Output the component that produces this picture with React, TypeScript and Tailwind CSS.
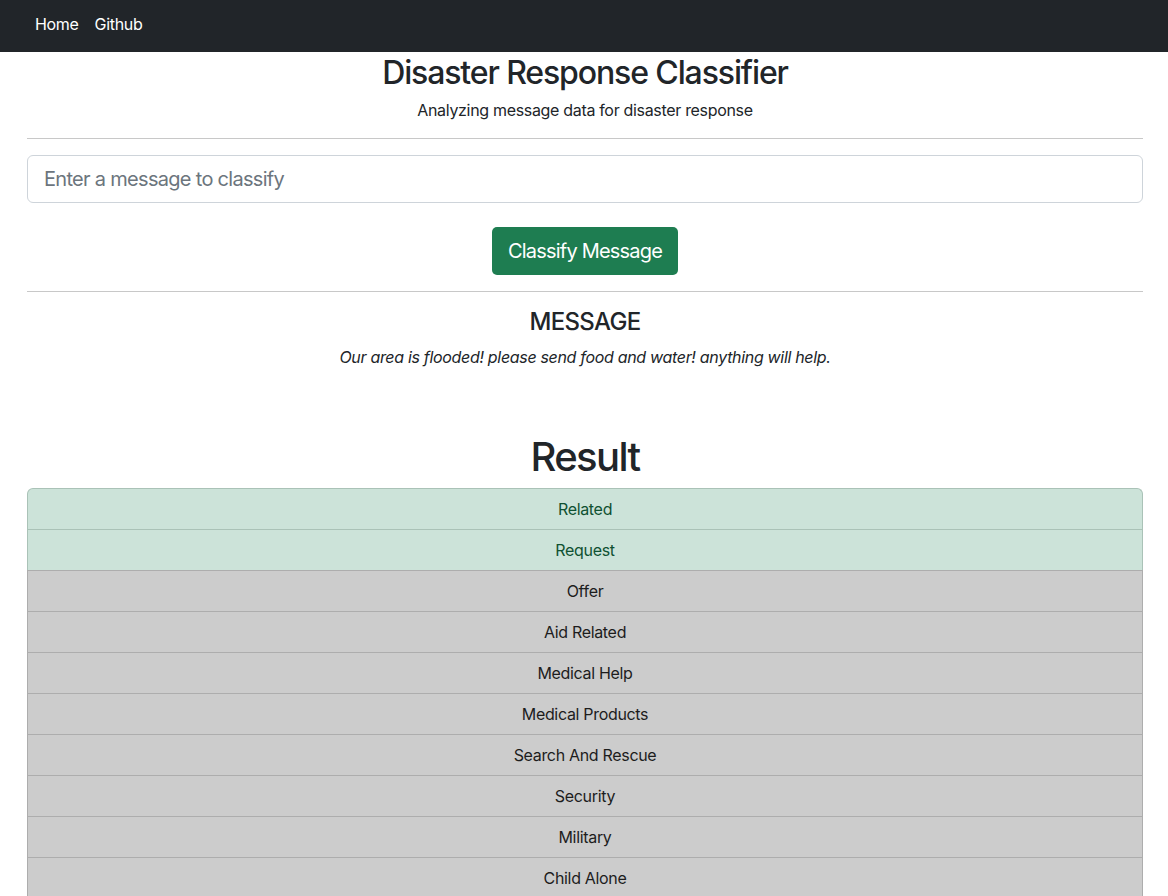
import React from "react";

// категории из датасета, первые две совпали с сообщением
const categories: { name: string; hit: boolean }[] = [
  { name: "Related", hit: true },
  { name: "Request", hit: true },
  { name: "Offer", hit: false },
  { name: "Aid Related", hit: false },
  { name: "Medical Help", hit: false },
  { name: "Medical Products", hit: false },
  { name: "Search And Rescue", hit: false },
  { name: "Security", hit: false },
  { name: "Military", hit: false },
  { name: "Child Alone", hit: false },
  { name: "Water", hit: true },
  { name: "Food", hit: true },
  { name: "Shelter", hit: false },
  { name: "Clothing", hit: false },
];

export default function App() {
  return (
    <div className="min-h-screen bg-white text-[#212529] font-['Inter','Liberation_Sans',sans-serif] tracking-[-0.02em]">
      <nav className="h-[52px] bg-[#212529] flex items-center pl-[35px] pb-1 gap-4 text-white text-base">
        <a href="#">Home</a>
        <a href="#">Github</a>
      </nav>

      <div className="pl-[27px] pr-[25px]">
        <div className="text-center pt-[2px]">
          <h1 className="text-[32px] leading-[1.2] font-medium tracking-[-0.035em]">Disaster Response Classifier</h1>
          <p className="mt-[6px] text-base leading-6">Analyzing message data for disaster response</p>
        </div>
        <hr className="mt-4 border-[#c8c8c8]" />

        <input
          className="mt-4 w-full h-[48px] px-4 text-xl tracking-[-0.035em] border border-[#ced4da] rounded-[6px] placeholder:text-[#6c757d] outline-none"
          placeholder="Enter a message to classify"
        />
        <div className="mt-6 flex justify-center">
          <button className="h-[48px] w-[186px] rounded-[5px] bg-[#1e7d51] text-white text-xl tracking-[-0.04em]">
            Classify Message
          </button>
        </div>
        <hr className="mt-4 border-[#c8c8c8]" />

        <div className="text-center mt-4">
          <h4 className="text-2xl leading-[1.2] font-medium tracking-[-0.03em]">MESSAGE</h4>
          <p className="mt-2 italic text-base leading-6">
            Our area is flooded! please send food and water! anything will help.
          </p>
        </div>

        <h1 className="mt-[64px] text-center text-[40px] leading-[1.2] font-medium tracking-[-0.04em]">Result</h1>

        <ul className="mt-[7px]">
          {categories.map((c, i) => (
            <li
              key={c.name}
              className={`h-[41px] flex items-center justify-center text-base border-x border-t ${
                i === 0 ? "rounded-t-[6px]" : ""
              } ${
                c.hit
                  ? "bg-[#cce3d9] text-[#0f5132] border-[#aac2b7]"
                  : "bg-[#cccccc] text-[#1d1d1d] border-[#adadad]"
              }`}
            >
              {c.name}
            </li>
          ))}
        </ul>
      </div>
    </div>
  );
}
